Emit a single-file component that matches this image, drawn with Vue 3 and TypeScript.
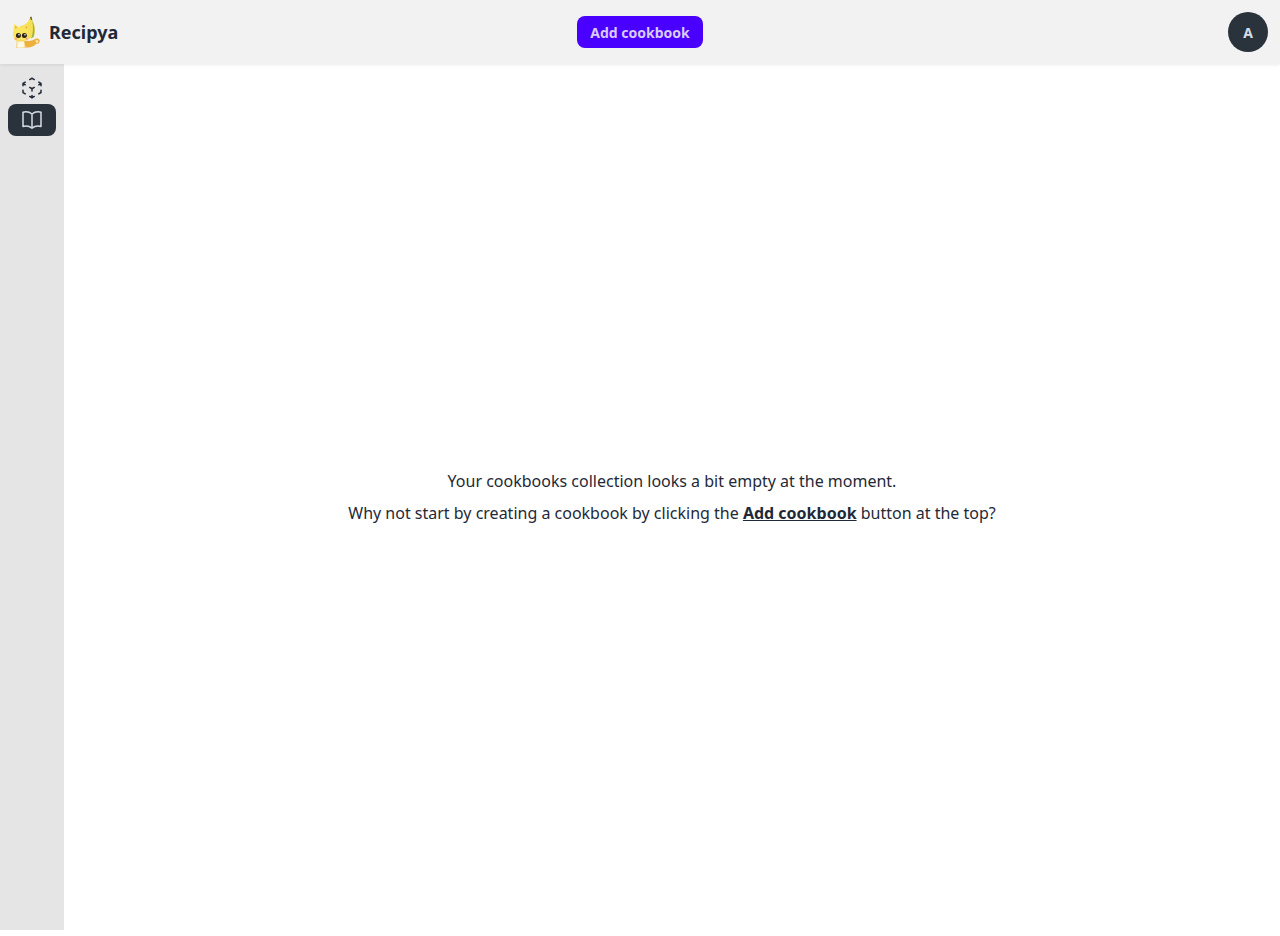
<script setup lang="ts">
const appName = 'Recipya'
</script>

<template>
  <div class="page">
    <header class="navbar">
      <div class="brand">
        <svg class="logo" viewBox="12 16 28 32" aria-hidden="true">
          <!-- banana behind the cat -->
          <path d="M29.500 18l2-.5.800 3c2.700 4.500 3.500 10.500 1.500 16.500l-8 3-6-14c5-.5 9-3.500 9.700-8z" fill="#f6e055" />
          <path d="M32 20c2.600 5 3.500 11 1.500 17l-2.300 1.500c2.200-6 2.200-12.500.8-18.500z" fill="#9db545" />
          <path d="M29.800 17.200l1.800-.6.700 3.300-1.300.3z" fill="#7c6a24" />
          <!-- tail -->
          <path d="M24 40.500c5 1 8.500.3 11-1.500 2.500-1 4.800 0 4.800 2s-2 3-3.800 3c-2.500 3-7.500 4.500-12 3z" fill="#edb03a" />
          <path d="M35.500 40.300c1.500-.4 3 .1 3 1.100s-1.200 1.500-2.500 1.400z" fill="#fcebb5" />
          <!-- cat -->
          <path d="M13.400 31l.8-7 4.600 3.300h4l4.400-2.800 1 6.500c1.600 6-2 11.500-7.500 11.500s-8.900-5.500-7.300-11.500z" fill="#f9e55e" />
          <path d="M15 25.700l.2 3.100 2.100-1.300z" fill="#f0a552" />
          <path d="M27.200 26l-.1 3-2.100-1.400z" fill="#f0a552" />
          <path d="M16.500 47.500l.8-6.500h7l1 6.300c-1.300 1-7.500 1.200-8.800.2z" fill="#fff8e0" stroke="#eec35c" stroke-width=".7" />
          <circle cx="18.400" cy="35.600" r="2.500" fill="#2b2118" />
          <circle cx="24.400" cy="35.600" r="2.500" fill="#2b2118" />
          <circle cx="19" cy="34.800" r=".8" fill="#fff" />
          <circle cx="25" cy="34.800" r=".8" fill="#fff" />
          <circle cx="15.800" cy="38.800" r="1.300" fill="#f4a98a" />
          <circle cx="26.800" cy="38.800" r="1.300" fill="#f4a98a" />
        </svg>
        <span class="brand-name">{{ appName }}</span>
      </div>
      <button class="add-btn" type="button">Add cookbook</button>
      <div class="avatar">A</div>
    </header>

    <div class="body">
      <aside class="sidebar">
        <a class="side-item">
          <svg class="side-icon" viewBox="0 0 24 24" fill="none" stroke="currentColor" stroke-width="1.500" stroke-linecap="round" stroke-linejoin="round" aria-hidden="true">
            <path d="m21 7.500-2.250-1.313M21 7.500v2.250m0-2.250-2.250 1.313M3 7.500l2.250-1.313M3 7.500l2.250 1.313M3 7.500v2.250m9 3 2.250-1.313M12 12.750l-2.250-1.313M12 12.750V15m0 6.750 2.250-1.313M12 21.750V19.500m0 2.250-2.250-1.313m0-16.875L12 2.250l2.250 1.313M21 14.250v2.250l-2.250 1.313m-13.500 0L3 16.500v-2.250" />
          </svg>
        </a>
        <a class="side-item active">
          <svg class="side-icon" viewBox="0 0 24 24" fill="none" stroke="currentColor" stroke-width="1.500" stroke-linecap="round" stroke-linejoin="round" aria-hidden="true">
            <path d="M12 6.042A8.967 8.967 0 0 0 6 3.750c-1.052 0-2.062.18-3 .512v14.250A8.987 8.987 0 0 1 6 18c2.305 0 4.408.867 6 2.292m0-14.250a8.966 8.966 0 0 1 6-2.292c1.052 0 2.062.18 3 .512v14.250A8.987 8.987 0 0 0 18 18a8.967 8.967 0 0 0-6 2.292m0-14.250v14.250" />
          </svg>
        </a>
      </aside>

      <main class="content">
        <p>Your cookbooks collection looks a bit empty at the moment.</p>
        <p>Why not start by creating a cookbook by clicking the <a class="inline-link">Add cookbook</a> button at the top?</p>
      </main>
    </div>
  </div>
</template>

<style>
html,
body {
  margin: 0;
  background: #fff;
}
</style>

<style scoped>
.page {
  display: flex;
  flex-direction: column;
  height: 930px;
  font-family: "Noto Sans", sans-serif;
  color: #1f2937;
}

.navbar {
  display: grid;
  grid-template-columns: 1fr auto 1fr;
  align-items: center;
  height: 64px;
  flex-shrink: 0;
  padding: 0 12px;
  background: #f2f2f2;
  box-shadow: 0 1px 3px rgba(0, 0, 0, 0.08);
  position: relative;
  z-index: 1;
  box-sizing: border-box;
}

.brand {
  display: flex;
  align-items: center;
  gap: 9px;
}

.logo {
  width: 28px;
  height: 32px;
}

.brand-name {
  font-size: 18px;
  font-weight: 700;
}

.add-btn {
  height: 32px;
  padding: 0 13px;
  border: none;
  border-radius: 8px;
  background: #4a00ff;
  color: #d9cbff;
  font-family: inherit;
  font-size: 14px;
  font-weight: 700;
}

.avatar {
  justify-self: end;
  width: 40px;
  height: 40px;
  border-radius: 50%;
  background: #2a323c;
  color: #d7dde4;
  display: flex;
  align-items: center;
  justify-content: center;
  font-size: 14px;
  font-weight: 700;
}

.body {
  display: flex;
  flex: 1;
  min-height: 0;
}

.sidebar {
  width: 64px;
  flex-shrink: 0;
  box-sizing: border-box;
  padding: 8px;
  background: #e5e5e5;
  display: flex;
  flex-direction: column;
}

.side-item {
  height: 32px;
  border-radius: 8px;
  display: flex;
  align-items: center;
  justify-content: center;
  color: #1f2937;
}

.side-item.active {
  background: #2a323c;
  color: #d7dde4;
}

.side-icon {
  width: 24px;
  height: 24px;
}

.content {
  flex: 1;
  display: flex;
  flex-direction: column;
  align-items: center;
  justify-content: center;
  gap: 8px;
  font-size: 16px;
  line-height: 24px;
}

.content p {
  margin: 0;
}

.inline-link {
  font-weight: 700;
  text-decoration: underline;
}
</style>
